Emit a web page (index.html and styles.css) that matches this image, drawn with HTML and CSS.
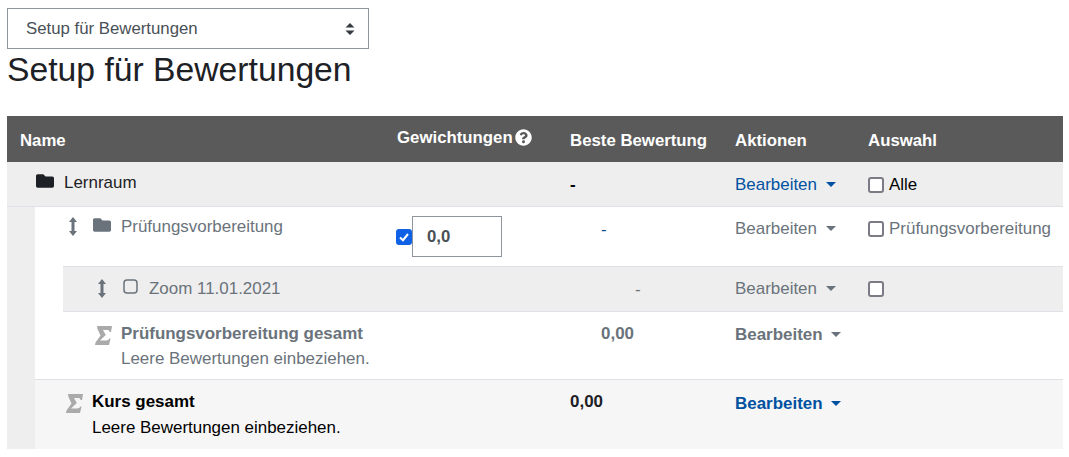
FILE: index.html
```html
<!DOCTYPE html>
<html lang="en">
<head>
    <meta charset="UTF-8">
    <title>Setup für Bewertungen</title>
    <link rel="stylesheet" href="styles.css">
</head>
<body>
    <select class="page-select">
        <option>Setup für Bewertungen</option>
    </select>
    <h1>Setup für Bewertungen</h1>
    <table class="grade-table">
        <colgroup>
            <col class="col-indent">
            <col class="col-indent">
            <col class="col-name">
            <col class="col-weight">
            <col class="col-best">
            <col class="col-action">
            <col class="col-select">
        </colgroup>
        <thead>
            <tr>
                <th colspan="3" class="th-name">Name</th>
                <th class="th-weight">
                    <span class="weight-head">Gewichtungen
                        <svg class="help-icon" viewBox="0 0 512 512"><path fill="currentColor" d="M504 256c0 136.997-111.043 248-248 248S8 392.997 8 256C8 119.083 119.043 8 256 8s248 111.083 248 248zM262.655 90c-54.497 0-89.255 22.957-116.549 63.758-3.536 5.286-2.353 12.415 2.715 16.258l34.699 26.31c5.205 3.947 12.621 3.008 16.665-2.122 17.864-22.658 30.113-35.797 57.303-35.797 20.429 0 45.698 13.148 45.698 32.958 0 14.976-12.363 22.667-32.534 33.976C247.128 238.528 216 254.941 216 296v4c0 6.627 5.373 12 12 12h56c6.627 0 12-5.373 12-12v-1.333c0-28.462 83.186-29.647 83.186-106.667 0-58.002-60.165-102-116.531-102zM256 338c-25.365 0-46 20.635-46 46 0 25.364 20.635 46 46 46s46-20.636 46-46c0-25.365-20.635-46-46-46z"/></svg>
                    </span>
                </th>
                <th>Beste Bewertung</th>
                <th>Aktionen</th>
                <th>Auswahl</th>
            </tr>
        </thead>
        <tbody>
            <tr class="row-root">
                <td colspan="3">
                    <div class="name-cell root-name">
                        <svg class="folder-icon" viewBox="0 0 512 512"><path fill="currentColor" d="M464 128H272l-64-64H48C21.49 64 0 85.49 0 112v288c0 26.51 21.49 48 48 48h416c26.51 0 48-21.49 48-48V176c0-26.51-21.49-48-48-48z"/></svg>
                        Lernraum
                    </div>
                </td>
                <td></td>
                <td class="best-root">-</td>
                <td><a class="action link">Bearbeiten <span class="caret"></span></a></td>
                <td><label class="pick"><input type="checkbox"> Alle</label></td>
            </tr>
            <tr class="row-cat muted">
                <td rowspan="4" class="indent-gray"></td>
                <td rowspan="3" class="indent-white"></td>
                <td>
                    <div class="name-cell cat-name">
                        <svg class="move-icon" viewBox="0 0 8 19"><path fill="currentColor" d="M4 0 8 5H5.500V14H8L4 19 0 14H2.500V5H0Z"/></svg>
                        <svg class="folder-icon" viewBox="0 0 512 512"><path fill="currentColor" d="M464 128H272l-64-64H48C21.49 64 0 85.49 0 112v288c0 26.51 21.49 48 48 48h416c26.51 0 48-21.49 48-48V176c0-26.51-21.49-48-48-48z"/></svg>
                        Prüfungsvorbereitung
                    </div>
                </td>
                <td>
                    <div class="weight-cell">
                        <input type="checkbox" checked>
                        <input type="text" class="weight-input" value="0,0">
                    </div>
                </td>
                <td class="best-cat">-</td>
                <td><a class="action">Bearbeiten <span class="caret"></span></a></td>
                <td><label class="pick"><input type="checkbox"> Prüfungsvorbereitung</label></td>
            </tr>
            <tr class="row-item muted">
                <td>
                    <div class="name-cell item-name">
                        <svg class="move-icon" viewBox="0 0 8 19"><path fill="currentColor" d="M4 0 8 5H5.500V14H8L4 19 0 14H2.500V5H0Z"/></svg>
                        <svg class="item-icon" viewBox="0 0 15 15"><rect x="1" y="1" width="13" height="13" rx="3" fill="none" stroke="currentColor" stroke-width="1.500"/></svg>
                        Zoom 11.01.2021
                    </div>
                </td>
                <td></td>
                <td class="best-item">-</td>
                <td><a class="action">Bearbeiten <span class="caret"></span></a></td>
                <td><label class="pick"><input type="checkbox"></label></td>
            </tr>
            <tr class="row-total muted">
                <td>
                    <div class="total-cell cat-total">
                        <svg class="sigma-icon" viewBox="0 0 17 19"><path fill="currentColor" d="M2 0H17L16 6H14.500C14.500 4.500 13.500 4 12 4H8L10.800 9 5 14.500H11C13 14.500 13.800 13.500 14.300 12.500H15.500L14 19H0L.5 16.500 5.500 9.500 2.500 3Z"/></svg>
                        <div>
                            <div class="total-title">Prüfungsvorbereitung gesamt</div>
                            <div class="total-note">Leere Bewertungen einbeziehen.</div>
                        </div>
                    </div>
                </td>
                <td></td>
                <td class="best-total-cat">0,00</td>
                <td><a class="action strong">Bearbeiten <span class="caret"></span></a></td>
                <td></td>
            </tr>
            <tr class="row-course">
                <td colspan="2">
                    <div class="total-cell course-total">
                        <svg class="sigma-icon" viewBox="0 0 17 19"><path fill="currentColor" d="M2 0H17L16 6H14.500C14.500 4.500 13.500 4 12 4H8L10.800 9 5 14.500H11C13 14.500 13.800 13.500 14.300 12.500H15.500L14 19H0L.5 16.500 5.500 9.500 2.500 3Z"/></svg>
                        <div>
                            <div class="total-title">Kurs gesamt</div>
                            <div class="total-note">Leere Bewertungen einbeziehen.</div>
                        </div>
                    </div>
                </td>
                <td></td>
                <td class="best-total">0,00</td>
                <td><a class="action link strong">Bearbeiten <span class="caret"></span></a></td>
                <td></td>
            </tr>
        </tbody>
    </table>
</body>
</html>
```
FILE: styles.css
```css
* {
    box-sizing: border-box;
}

body {
    margin: 8px 6px 8px 7px;
    font-family: "Liberation Sans", sans-serif;
    font-size: 16.8px;
    line-height: 24px;
    color: #1d2125;
    background: white;
}

.page-select {
    display: block;
    width: 362px;
    height: 41px;
    padding: 0 30px 0 18px;
    border: 1px solid #8f959e;
    border-radius: 0;
    font-family: inherit;
    font-size: 16.8px;
    color: #495057;
    appearance: none;
    background: white url("data:image/svg+xml,%3Csvg xmlns='http://www.w3.org/2000/svg' viewBox='0 0 10 12'%3E%3Cpath fill='%23343a40' d='M5 0 9.500 4.500H.5ZM5 12 .5 7.500H9.500Z'/%3E%3C/svg%3E") no-repeat right 13px center / 10px 12px;
}

h1 {
    margin: 0 0 27px;
    font-size: 33.700px;
    font-weight: 400;
    line-height: 40px;
}

.grade-table {
    width: 1056px;
    table-layout: fixed;
    border-collapse: collapse;
}

.col-indent { width: 28px; }
.col-name { width: 321px; }
.col-weight { width: 173px; }
.col-best { width: 165px; }
.col-action { width: 133px; }
.col-select { width: 208px; }

.grade-table th {
    height: 46px;
    padding: 4px 0 0 13px;
    background: #5a5a5a;
    color: white;
    font-weight: 700;
    text-align: left;
}

.weight-head {
    display: flex;
    align-items: center;
    gap: 2px;
    margin-top: -7px;
}

.help-icon {
    width: 17px;
    height: 17px;
}

.grade-table td {
    padding: 0 0 0 13px;
    font-size: 16.95px;
    vertical-align: top;
}

.grade-table td[colspan],
.grade-table .indent-gray,
.grade-table .indent-white,
.row-cat td:nth-child(3),
.row-item td:first-child,
.row-total td:first-child {
    padding-left: 0;
}

.muted {
    color: #6a737b;
}

.row-root {
    height: 44px;
    background: #eeeeee;
    border-bottom: 1px solid #dee2e6;
}

.row-cat {
    height: 60px;
    background: white;
    border-bottom: 1px solid #dee2e6;
}

.row-item {
    height: 45px;
    background: #eeeeee;
    border-bottom: 1px solid #dee2e6;
}

.row-total {
    height: 68px;
    background: white;
    border-bottom: 1px solid #dee2e6;
}

.row-course {
    height: 70px;
    background: #f6f6f6;
}

.indent-gray {
    background: #eeeeee;
}

.indent-white {
    background: white;
}

.name-cell {
    display: flex;
    align-items: center;
}

.folder-icon {
    width: 18px;
    height: 18px;
    margin-bottom: 4px;
}

.move-icon {
    width: 8px;
    height: 19px;
}

.item-icon {
    width: 15px;
    height: 15px;
    margin-bottom: 4px;
}

.root-name {
    gap: 10px;
    padding: 9px 0 0 29px;
}

.cat-name {
    padding: 8px 0 0 6px;
}

.cat-name .folder-icon {
    margin-left: 16px;
    margin-right: 10px;
}

.item-name {
    padding: 10px 0 0 35px;
}

.item-name .item-icon {
    margin-left: 17px;
    margin-right: 11px;
}

.weight-cell {
    display: flex;
    align-items: flex-end;
    margin-left: -1px;
    padding-top: 9px;
}

.weight-cell input[type="checkbox"] {
    margin: 0 0 12px;
}

input[type="checkbox"] {
    flex-shrink: 0;
    width: 16px;
    height: 16px;
    margin: 0;
    border: 2px solid #7b7b85;
    border-radius: 3px;
    background: white;
    appearance: none;
}

input[type="checkbox"]:checked {
    border-color: #0f62e6;
    background: #0f62e6 url("data:image/svg+xml,%3Csvg xmlns='http://www.w3.org/2000/svg' viewBox='0 0 12 12'%3E%3Cpath fill='none' stroke='white' stroke-width='2' d='M2 6.500 5 9.200 10 3'/%3E%3C/svg%3E") no-repeat center / 12px 12px;
}

.weight-input {
    width: 90px;
    height: 41px;
    padding: 2px 14px 0;
    border: 1px solid #8f959e;
    font-family: inherit;
    font-size: 16.8px;
    font-weight: 700;
    color: #495057;
}

.best-root {
    padding-top: 11px !important;
    font-weight: 700;
    color: black;
}

.best-cat {
    padding: 11px 0 0 44px !important;
    color: #0f4c81;
}

.best-item {
    padding: 11px 0 0 78px !important;
}

.best-total-cat {
    padding: 10px 0 0 44px !important;
    font-weight: 700;
}

.best-total {
    padding-top: 10px !important;
    font-weight: 700;
    color: #1d2125;
}

.action {
    display: inline-block;
    padding-top: 10px;
    white-space: nowrap;
}

.action.link {
    padding-top: 11px;
    color: #0051a0;
}

.action.strong {
    padding-top: 11px;
    font-weight: 700;
}

.action.link.strong {
    padding-top: 12px;
}

.caret {
    display: inline-block;
    margin-left: 4px;
    vertical-align: 3px;
    border-top: 5px solid currentColor;
    border-left: 5px solid transparent;
    border-right: 5px solid transparent;
}

.pick {
    display: flex;
    align-items: center;
    gap: 5px;
    min-height: 34px;
    padding-top: 10px;
}

.row-root .pick {
    padding-top: 11px;
    color: black;
}

.total-cell {
    display: flex;
    padding-top: 10px;
}

.cat-total {
    padding-left: 32px;
}

.course-total {
    padding-left: 31px;
}

.sigma-icon {
    flex-shrink: 0;
    width: 17px;
    height: 19px;
    margin: 4px 9px 0 0;
    color: #aaaaaa;
}

.total-title {
    font-weight: 700;
    line-height: 24px;
}

.total-note {
    margin-top: 1px;
    line-height: 24px;
}

.row-course .total-title,
.row-course .total-note {
    color: black;
}

.row-course .total-note {
    margin-top: 2px;
}
```
